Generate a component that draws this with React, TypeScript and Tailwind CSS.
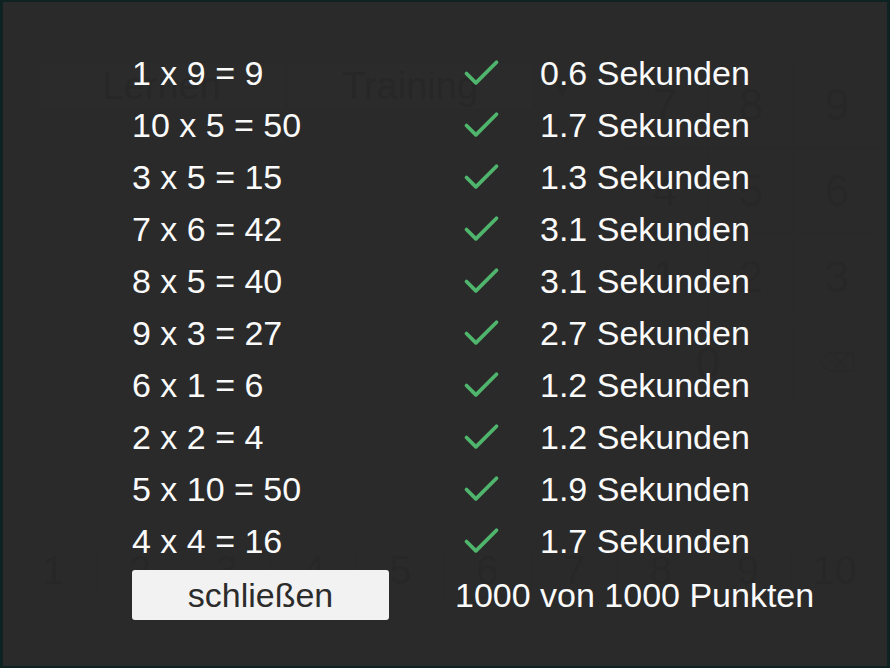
import { Check } from 'lucide-react'

const results = [
  { task: '1 x 9 = 9', time: '0.6' },
  { task: '10 x 5 = 50', time: '1.7' },
  { task: '3 x 5 = 15', time: '1.3' },
  { task: '7 x 6 = 42', time: '3.1' },
  { task: '8 x 5 = 40', time: '3.1' },
  { task: '9 x 3 = 27', time: '2.7' },
  { task: '6 x 1 = 6', time: '1.2' },
  { task: '2 x 2 = 4', time: '1.2' },
  { task: '5 x 10 = 50', time: '1.9' },
  { task: '4 x 4 = 16', time: '1.7' },
]

function BackgroundApp() {
  const keys = ['7', '8', '9', '4', '5', '6', '1', '2', '3']
  return (
    <div className="flex flex-col h-full px-[10px] pt-[62px] text-[#1c1c1c]">
      <div className="flex gap-[2px]">
        {/* mode buttons */}
        <div className="flex gap-[2px] h-[48px] w-[580px] pl-[28px]">
          <div className="w-[260px] bg-[#585858] border border-[#3a3a3a] flex items-center justify-center text-[38px]">Lernen</div>
          <div className="w-[258px] bg-[#585858] border border-[#3a3a3a] flex items-center justify-center text-[38px]">Training</div>
          <div className="w-[58px] flex items-center justify-center text-[30px]">▾</div>
        </div>
        {/* keypad */}
        <div className="grid grid-cols-3 w-[258px] ml-[30px]">
          {keys.map((k) => (
            <div key={k} className="h-[86px] border border-[#3a3a3a] bg-[#4c4c4c] flex items-center justify-center text-[44px]">{k}</div>
          ))}
          <div className="col-span-2 h-[86px] border border-[#3a3a3a] bg-[#4c4c4c] flex items-center justify-center text-[44px]">0</div>
          <div className="h-[86px] border border-[#3a3a3a] bg-[#4c4c4c] flex items-center justify-center text-[26px] text-[#2a2a2a]">⌫</div>
        </div>
      </div>
      <div className="grid grid-cols-10 w-[868px] mt-auto mb-[70px] h-[51px]">
        {Array.from({ length: 10 }, (_, i) => (
          <div key={i} className="border border-[#3a3a3a] bg-[#4c4c4c] flex items-center justify-center text-[40px] leading-none pb-[6px]">{i + 1}</div>
        ))}
      </div>
    </div>
  )
}

export default function App() {
  return (
    <div
      className="relative w-[890px] h-[668px] bg-[#444444] overflow-hidden"
      style={{ fontFamily: '"Liberation Sans", Arial, sans-serif' }}
    >
      <BackgroundApp />

      {/* result dialog */}
      <div className="absolute inset-0 border-l-[3px] border-r-[3px] border-t-[2px] border-b-[2px] border-[#0f2222]">
        <div className="w-full h-full bg-[#282828]/[0.93] pt-[45px] pl-[129px]">
          <div className="grid grid-cols-[323px_85px_auto] text-[34px] text-[#fafafa]">
            {results.map((r) => (
              <div key={r.task} className="contents">
                <div className="h-[52px] leading-[52px] whitespace-nowrap">{r.task}</div>
                <div className="h-[52px] flex items-center pl-[4px]">
                  <Check size={45} strokeWidth={2} className="text-[#4fb56c]" />
                </div>
                <div className="h-[52px] leading-[52px] whitespace-nowrap">{r.time} Sekunden</div>
              </div>
            ))}
            <div className="pt-[3px]">
              <button className="w-[257px] h-[50px] bg-[#f2f2f2] rounded-[3px] text-[#2c2c2c] text-[34px] leading-[50px]">
                schließen
              </button>
            </div>
            <div className="col-span-2 h-[52px] leading-[52px] mt-[2px] whitespace-nowrap">1000 von 1000 Punkten</div>
          </div>
        </div>
      </div>
    </div>
  )
}
